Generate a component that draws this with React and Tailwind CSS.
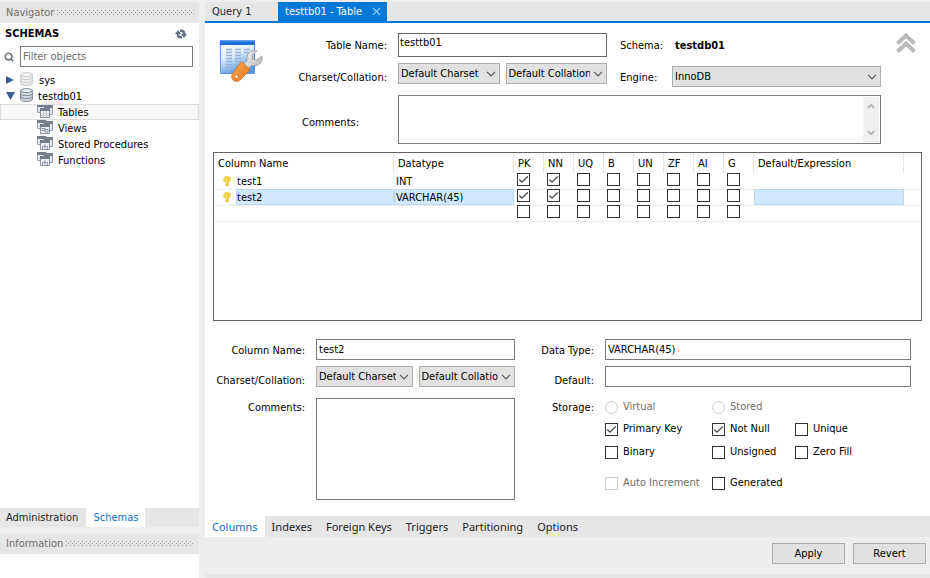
import React, { useState } from "react";
import { Search } from "lucide-react";

const flags = ["PK", "NN", "UQ", "B", "UN", "ZF", "AI", "G"];

const initialColumns = [
  { name: "test1", type: "INT", flags: ["PK", "NN"] },
  { name: "test2", type: "VARCHAR(45)", flags: ["PK", "NN"] },
  { name: "", type: "", flags: [] },
];

const schemaItems = ["Tables", "Views", "Stored Procedures", "Functions"];

const editorTabs = [
  "Columns",
  "Indexes",
  "Foreign Keys",
  "Triggers",
  "Partitioning",
  "Options",
];

const labelClass = "h-[21px] pr-[11px] text-right leading-[23px]";
const inputClass = "h-[21px] min-w-0 border border-[#7a7a7a] px-[2px]";
const headClass = "border-r border-[#e5e5e5] p-0 pt-[2px] pl-[4px] font-normal";

const Check = ({ label, disabled, ...props }) => (
  <label
    className={`flex items-center gap-[5px] ${disabled ? "text-[#6d6d6d]" : ""}`}
  >
    <span className="relative block size-[13px] shrink-0">
      <input
        type="checkbox"
        disabled={disabled}
        className="peer block size-[13px] appearance-none border border-[#333] bg-white disabled:border-[#ccc]"
        {...props}
      />
      <svg
        viewBox="0 0 13 13"
        className="pointer-events-none absolute inset-0 hidden size-[13px] peer-checked:block"
      >
        <path d="M2.300 6.500 5 9.200 10.900 3.400" fill="none" stroke="#444" strokeWidth="1.300" />
      </svg>
    </span>
    {label}
  </label>
);

const Radio = ({ label }) => (
  <label className="flex items-center gap-[5px] text-[#6d6d6d]">
    <input
      type="radio"
      name="storage"
      disabled
      className="size-[13px] shrink-0 appearance-none rounded-full border border-[#ccc] bg-white"
    />
    {label}
  </label>
);

const Select = ({ value, label, id }) => (
  <div className="relative h-[21px] min-w-0 flex-1">
    <select
      id={id}
      aria-label={label}
      className="h-[21px] w-full appearance-none border border-[#adadad] bg-[#e1e1e1] pr-4 pl-[2px]"
    >
      <option>{value}</option>
    </select>
    <svg
      viewBox="0 0 10 6"
      className="pointer-events-none absolute top-2 right-1 h-[6px] w-[10px]"
    >
      <path d="M1 .8 5 4.800 9 .8" fill="none" stroke="#555" strokeWidth="1.200" />
    </svg>
  </div>
);

const DatabaseIcon = ({ active }) => (
  <svg
    viewBox="0 0 13 14"
    className={`h-[14px] w-[13px] shrink-0 ${active ? "text-[#78828f]" : "text-[#c3c5c8]"}`}
  >
    <path
      d="M.7 2.600v8.800c0 1.200 2.400 2 5.800 2s5.800-.8 5.800-2V2.600"
      fill={active ? "#d7dce4" : "#f1f1f1"}
      stroke="currentColor"
    />
    <ellipse
      cx="6.500"
      cy="2.600"
      rx="5.800"
      ry="2"
      fill={active ? "#e9ecf1" : "#f6f6f6"}
      stroke="currentColor"
    />
    <path
      d="M.7 5.700c0 1.200 2.400 1.900 5.800 1.900s5.800-.7 5.800-1.900M.7 8.600c0 1.200 2.400 1.900 5.800 1.900s5.800-.7 5.800-1.900"
      fill="none"
      stroke="currentColor"
    />
  </svg>
);

const GroupIcon = ({ kind }) => (
  <svg viewBox="0 0 16 14" className="h-[14px] w-4 shrink-0">
    <path d="M.5 1.500h8v7h-8z" fill="#e3e6ea" stroke="#9aa2ae" />
    <path d="M0 0h9v3H0z" fill="#737e8e" />
    <path d="M7.500 2.500h8v8h-8z" fill="#e3e6ea" stroke="#9aa2ae" />
    <path d="M7 1h9v3H7z" fill="#737e8e" />
    <path d="M3.500 5.500h9v8h-9z" fill="#eef0f3" stroke="#8993a1" />
    <path d="M3 4h10v3H3z" fill="#737e8e" />
    {kind === "Tables" && (
      <path d="M4 9.500h8M4 11.500h8M6.500 7v6M9.500 7v6" stroke="#c3c9d1" />
    )}
    {kind === "Views" && (
      <path d="M5 8.500h3v2H5zM8 9.500h3v2.500H8z" fill="none" stroke="#8d97a5" />
    )}
    {kind !== "Tables" && kind !== "Views" && (
      <path d="M8 8v2M5.500 12.800v-2.300h5v2.300M8 10v2.500" fill="none" stroke="#8d97a5" />
    )}
  </svg>
);

const KeyIcon = () => (
  <svg viewBox="0 0 8 11" className="h-[11px] w-2 shrink-0">
    <path d="M2.500 5h3v4.300L4 10.800 2.500 9.300z" fill="#e9bd2e" />
    <path d="M2.300.6h3.400L7.200 2.300v2.200L5.700 6.200H2.300L.8 4.500V2.300z" fill="#f7d33f" stroke="#e6b930" strokeWidth=".6" />
    <path d="M3.400 1.800v7" stroke="#fdeb9a" strokeWidth=".8" />
  </svg>
);

const TableWrenchIcon = () => (
  <svg viewBox="0 0 44 44" className="size-11">
    <defs>
      <linearGradient id="sheet" x1="0" y1="0" x2=".4" y2="1">
        <stop offset="0" stopColor="#ffffff" />
        <stop offset=".5" stopColor="#e3effb" />
        <stop offset="1" stopColor="#5b98e2" />
      </linearGradient>
      <linearGradient id="handle" x1="0" y1="0" x2="1" y2="1">
        <stop offset="0" stopColor="#ffab52" />
        <stop offset="1" stopColor="#e2741b" />
      </linearGradient>
      <linearGradient id="steel" x1="0" y1="0" x2="1" y2="1">
        <stop offset="0" stopColor="#fbfbfb" />
        <stop offset="1" stopColor="#b0b0b0" />
      </linearGradient>
    </defs>
    <path d="M1.500 1.500h34v33h-34z" fill="url(#sheet)" stroke="#5f97dd" />
    <path d="M1 1h35v5H1z" fill="#1f6fd6" />
    <path d="M1 1h35v1.500H1z" fill="#5aa0ee" />
    <path
      d="M7 10.500h6M16 10.500h6M25 10.500h6M7 13.500h6M16 13.500h6M25 13.500h4M7 16.500h6M16 16.500h6M7 19.500h6M16 19.500h6M7 22.500h6M16 22.500h6M7 25.500h6M16 25.500h4M7 28.500h6"
      stroke="#94b2dc"
      strokeWidth="1.400"
    />
    <path
      d="M38 12c-5-1.300-10 1.700-10 6.500 0 2 .2 3-.8 4l-3.600 3.600 4.800 4.800 3.600-3.600c1-1 2.200-.7 4-.7 4.600 0 8-4.200 6.800-9.400l-5 3.800-4-.8-.8-4z"
      fill="url(#steel)"
      stroke="#949494"
      strokeWidth=".8"
    />
    <path
      d="M23.500 23.500 30 29.500c1 1 .8 1.700 0 2.600L21 41c-2 1.900-5.200 1.900-7 0s-1.800-4.800 0-7l7.400-10c.7-.9 1.300-1.200 2.100-.5z"
      fill="url(#handle)"
      stroke="#d0701c"
      strokeWidth=".8"
    />
    <circle cx="17.500" cy="37.500" r="1.600" fill="#fff" stroke="#b86a26" strokeWidth=".6" />
  </svg>
);

const RefreshIcon = () => (
  <svg viewBox="0 0 12 10" className="h-[10px] w-3">
    <path d="M5 1.800h1.500A2.500 2.500 0 0 1 9 4.300V6" fill="none" stroke="#5f7186" strokeWidth="2.600" />
    <path d="M7 8.200H5.500A2.500 2.500 0 0 1 3 5.700V4" fill="none" stroke="#5f7186" strokeWidth="2.600" />
    <path d="M5.800 5H12L9 9zM0 5h6.200L3 1z" fill="#5f7186" />
  </svg>
);

// Dotted grip that fills the rest of a panel title bar
const Grip = ({ id }) => (
  <svg className="h-[5px] flex-1" aria-hidden="true">
    <defs>
      <pattern id={id} width="4" height="4" patternUnits="userSpaceOnUse">
        <path d="M0 0h1v1H0zM2 2h1v1H2z" fill="#a0a0a0" />
      </pattern>
    </defs>
    <rect width="100%" height="5" fill={`url(#${id})`} />
  </svg>
);

const PanelTitle = ({ title }) => (
  <div className="flex h-[21px] items-center gap-[3px] bg-[#e6e6e6] pr-[5px] pl-[6px] text-[#6d6d6d]">
    {title}
    <Grip id={`grip-${title}`} />
  </div>
);

const Sidebar = () => (
  <aside className="flex w-[199px] shrink-0 flex-col bg-white">
    <PanelTitle title="Navigator" />
    <div className="flex h-[23px] items-center justify-between pr-3 pb-[2px] pl-[5px]">
      <h2 className="font-bold">SCHEMAS</h2>
      <button aria-label="Refresh">
        <RefreshIcon />
      </button>
    </div>
    <div className="flex items-center gap-[6px] pr-[6px] pl-1">
      <Search strokeWidth={4} className="size-[10px] text-[#6b7480]" />
      <input
        placeholder="Filter objects"
        aria-label="Filter objects"
        className={`flex-1 placeholder:text-[#6d6d6d] ${inputClass}`}
      />
    </div>
    <ul className="mt-[5px] leading-[18px]">
      <li className="flex h-4 items-start gap-[6px] pl-[6px]">
        <svg viewBox="0 -3 8 16" className="h-4 w-2">
          <path d="M0 1v8l8-4z" fill="#3b5b8c" />
        </svg>
        <DatabaseIcon />
        sys
      </li>
      <li className="flex h-4 items-start gap-[5px] pl-[6px]">
        <svg viewBox="0 -3 9 16" className="h-4 w-[9px]">
          <path d="M0 1h9L4.500 9z" fill="#3b5b8c" />
        </svg>
        <DatabaseIcon active />
        testdb01
      </li>
      {schemaItems.map((item) => (
        <li
          key={item}
          className={`flex h-4 items-start gap-[5px] pl-[37px] ${
            item === "Tables" ? "bg-[#f7f7f7] outline-1 -outline-offset-1 outline-[#dedede]" : ""
          }`}
        >
          <GroupIcon kind={item} />
          {item}
        </li>
      ))}
    </ul>
    <div className="mt-auto flex h-[19px] bg-[#e6e6e6]">
      <button className="pr-2 pl-[6px] text-[#222]">Administration</button>
      <button className="bg-white px-[7px] text-[#0f70c4]">Schemas</button>
    </div>
    <div className="h-[6px] bg-[#eeeef0]" />
    <PanelTitle title="Information" />
    <div className="h-6" />
  </aside>
);

const TableHeader = () => {
  const [tableName, setTableName] = useState("testtb01");

  return (
    <div className="relative grid grid-cols-[193px_1fr_65px_1fr_49px] pt-[10px]">
      <div className="absolute top-4 left-[14px]">
        <TableWrenchIcon />
      </div>
      <label htmlFor="table-name" className="h-6 pr-[11px] text-right leading-[26px]">
        Table Name:
      </label>
      <input
        id="table-name"
        value={tableName}
        onChange={(e) => setTableName(e.target.value)}
        className="h-6 min-w-0 border border-[#646464] px-px pb-[6px]"
      />
      <span className="h-6 pl-[13px] leading-[26px]">Schema:</span>
      <span className="h-6 pl-[3px] leading-[26px] font-bold">testdb01</span>
      <button aria-label="Collapse" className="flex justify-center">
        <svg viewBox="0 0 20 20" className="size-5">
          <path
            d="M1.500 10.500 10 2.500l8.500 8M1.500 18.500 10 10.500l8.500 8"
            fill="none"
            stroke="#b9b9b9"
            strokeWidth="4"
          />
        </svg>
      </button>

      <label htmlFor="table-charset" className={`mt-[9px] ${labelClass}`}>
        Charset/Collation:
      </label>
      <div className="mt-[6px] flex gap-[6px]">
        <Select id="table-charset" value="Default Charset" />
        <Select label="Collation" value="Default Collation" />
      </div>
      <label htmlFor="engine" className="mt-[9px] h-[21px] pl-[13px] leading-[23px]">
        Engine:
      </label>
      <div className="mt-[9px] flex">
        <Select id="engine" value="InnoDB" />
      </div>
      <span />

      <label
        htmlFor="table-comments"
        className="mt-2 flex items-center justify-end pt-[6px] pr-[39px]"
      >
        Comments:
      </label>
      <div className="col-span-3 mt-2 flex h-[49px] border border-[#7a7a7a] p-px">
        <textarea id="table-comments" className="min-w-0 flex-1 resize-none px-px" />
        <div className="flex w-4 flex-col items-center justify-between bg-[#f0f0f0] py-[6px]">
          <svg viewBox="0 0 8 6" className="h-[6px] w-2">
            <path d="M.8 5 4 1.800 7.200 5" fill="none" stroke="#b9b9b9" strokeWidth="2" />
          </svg>
          <svg viewBox="0 0 8 6" className="h-[6px] w-2">
            <path d="M.8 1 4 4.200 7.200 1" fill="none" stroke="#b9b9b9" strokeWidth="2" />
          </svg>
        </div>
      </div>
    </div>
  );
};

const ColumnsTable = () => {
  const [columns, setColumns] = useState(initialColumns);

  const toggle = (index, flag) => {
    setColumns(
      columns.map((col, i) => {
        if (i !== index) return col;
        const has = col.flags.includes(flag);
        return {
          ...col,
          flags: has ? col.flags.filter((f) => f !== flag) : [...col.flags, flag],
        };
      })
    );
  };

  return (
    <div className="mx-2 mt-2 h-[169px] border border-[#646464]">
      <table className="w-full table-fixed border-separate border-spacing-0 text-left">
        <thead>
          <tr className="h-5">
            <th className={`w-[180px] ${headClass}`}>Column Name</th>
            <th className={`w-[120px] ${headClass}`}>Datatype</th>
            {flags.map((flag) => (
              <th key={flag} className={`w-[30px] ${headClass}`}>
                {flag}
              </th>
            ))}
            <th className={`w-[150px] ${headClass}`}>Default/Expression</th>
            <th className="p-0" />
          </tr>
        </thead>
        <tbody className="leading-[18px]">
          {columns.map((col, index) => {
            const cell =
              col.name === "test2"
                ? "h-4 bg-[#d1e8ff] outline-1 -outline-offset-1 outline-[#bcd9f2]"
                : "h-4";
            return (
              <tr
                key={index}
                className={
                  index === columns.length - 1
                    ? "h-4 shadow-[inset_0_1px_#ececec,0_1px_#ececec]"
                    : index > 0
                      ? "h-4 shadow-[inset_0_1px_#ececec]"
                      : "h-4"
                }
              >
                <td className="p-0">
                  <div className="flex h-4">
                    <span className="flex w-[22px] items-center justify-center pl-[4px]">
                      {col.name && <KeyIcon />}
                    </span>
                    <span className={`flex-1 pl-px ${cell}`}>{col.name}</span>
                  </div>
                </td>
                <td className="p-0">
                  <div className={`pl-[2px] ${cell}`}>{col.type}</div>
                </td>
                {flags.map((flag) => (
                  <td key={flag} className="p-0 pb-[3px] pl-[3px]">
                    <Check
                      aria-label={flag}
                      checked={col.flags.includes(flag)}
                      onChange={() => toggle(index, flag)}
                    />
                  </td>
                ))}
                <td className="p-0">
                  <div className={cell} />
                </td>
                <td className="p-0" />
              </tr>
            );
          })}
        </tbody>
      </table>
    </div>
  );
};

const ColumnForm = () => (
  <div className="mt-[18px] grid grid-cols-[111px_199fr_90px_306fr] pr-[19px]">
    <label htmlFor="column-name" className={labelClass}>
      Column Name:
    </label>
    <input id="column-name" defaultValue="test2" className={inputClass} />
    <label htmlFor="data-type" className={labelClass}>
      Data Type:
    </label>
    <input id="data-type" defaultValue="VARCHAR(45)" className={inputClass} />

    <label htmlFor="column-charset" className={`mt-[9px] ${labelClass}`}>
      Charset/Collation:
    </label>
    <div className="mt-[6px] flex gap-[6px]">
      <Select id="column-charset" value="Default Charset" />
      <Select label="Column collation" value="Default Collation" />
    </div>
    <label htmlFor="default" className={`mt-[9px] ${labelClass}`}>
      Default:
    </label>
    <input id="default" className={`mt-[6px] ${inputClass}`} />

    <label htmlFor="column-comments" className={`mt-[6px] ${labelClass}`}>
      Comments:
    </label>
    <textarea
      id="column-comments"
      className="mt-2 h-[102px] min-w-0 resize-none border border-[#7a7a7a] px-[2px]"
    />
    <span className={`mt-[6px] ${labelClass}`}>Storage:</span>
    <div className="mt-[6px] grid grid-cols-[107px_83px_1fr] content-start whitespace-nowrap">
      <Radio label="Virtual" />
      <Radio label="Stored" />
      <span className="h-[22px]" />
      <Check label="Primary Key" defaultChecked />
      <Check label="Not Null" defaultChecked />
      <div className="flex h-[22px]">
        <Check label="Unique" />
      </div>
      <Check label="Binary" />
      <Check label="Unsigned" />
      <div className="flex h-6">
        <Check label="Zero Fill" />
      </div>
      <div className="mt-2 flex h-[22px]">
        <Check label="Auto Increment" disabled />
      </div>
      <div className="mt-2 flex h-[22px]">
        <Check label="Generated" />
      </div>
    </div>
  </div>
);

const App = () => {
  const [tab, setTab] = useState("Columns");

  return (
    <div className="flex min-h-screen gap-[6px] bg-[#eeeef0] pt-[2px] font-['DejaVu_Sans_Condensed','Open_Sans',sans-serif] text-[11px] leading-4 text-black">
      <Sidebar />
      <main className="flex min-w-0 flex-1 flex-col">
        <div className="flex h-[21px] border-b-2 border-[#0078d7] bg-[#e6e6e6]">
          <button className="w-[73px] pl-[7px] text-left text-[#222]">Query 1</button>
          <button className="flex w-[109px] items-center justify-between bg-[#0078d7] pr-[6px] pl-[7px] text-white">
            testtb01 - Table
            <svg viewBox="0 0 9 9" className="size-[9px]">
              <path d="m1 1 7 7M8 1 1 8" stroke="#8fc6f2" strokeWidth="1.200" />
            </svg>
          </button>
        </div>
        <div className="flex-1 bg-white pb-4">
          <TableHeader />
          <ColumnsTable />
          <ColumnForm />
        </div>
        <div className="flex h-[21px] bg-[#e6e6e6] font-['Noto_Sans',sans-serif]">
          {editorTabs.map((name) => (
            <button
              key={name}
              onClick={() => setTab(name)}
              className={`px-[7px] ${
                tab === name ? "bg-white text-[#0f70c4]" : "text-[#222]"
              }`}
            >
              {name}
            </button>
          ))}
        </div>
        <div className="flex h-[37px] justify-end gap-2 pt-[6px] pr-1">
          <button className="h-[21px] w-[73px] border border-[#adadad] bg-[#e1e1e1]">Apply</button>
          <button className="h-[21px] w-[73px] border border-[#adadad] bg-[#e1e1e1]">Revert</button>
        </div>
        <div className="h-1 bg-[#e6e6e6]" />
      </main>
    </div>
  );
};

export default App;
